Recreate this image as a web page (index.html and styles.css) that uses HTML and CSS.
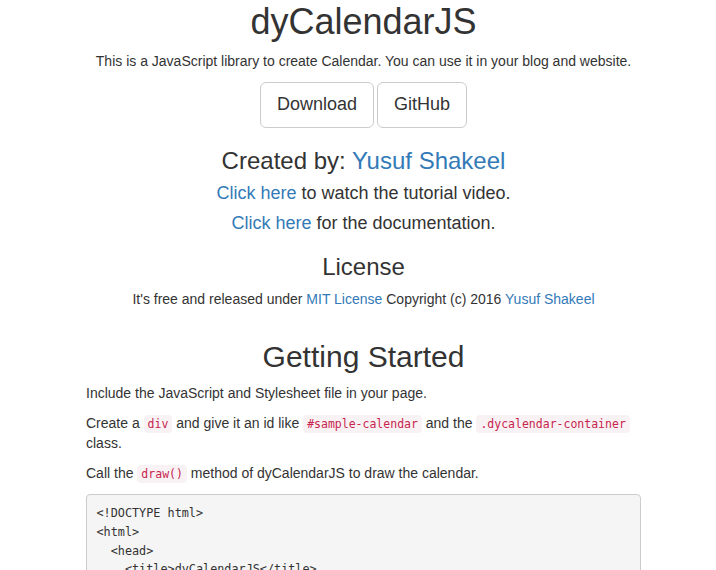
FILE: index.html
```html
<!DOCTYPE html>
<html lang="en">
<head>
<meta charset="utf-8">
<title>dyCalendarJS</title>
<link rel="stylesheet" href="styles.css">
</head>
<body>
<div class="page">
  <header class="center">
    <h1 class="title">dyCalendarJS</h1>
    <p>This is a JavaScript library to create Calendar. You can use it in your blog and website.</p>
    <div class="buttons">
      <a class="btn" href="#">Download</a>
      <a class="btn" href="#">GitHub</a>
    </div>
    <h3>Created by: <a href="#">Yusuf Shakeel</a></h3>
    <h4><a href="#">Click here</a> to watch the tutorial video.</h4>
    <h4><a href="#">Click here</a> for the documentation.</h4>
    <h3>License</h3>
    <p>It's free and released under <a href="#">MIT License</a> Copyright (c) 2016 <a href="#">Yusuf Shakeel</a></p>
  </header>
  <section class="start">
    <h2 class="center">Getting Started</h2>
    <p>Include the JavaScript and Stylesheet file in your page.</p>
    <p>Create a <code>div</code> and give it an id like <code>#sample-calendar</code> and the <code>.dycalendar-container</code> class.</p>
    <p>Call the <code>draw()</code> method of dyCalendarJS to draw the calendar.</p>
<pre>&lt;!DOCTYPE html&gt;
&lt;html&gt;
  &lt;head&gt;
    &lt;title&gt;dyCalendarJS&lt;/title&gt;
    &lt;link rel="stylesheet" href="css/dycalendar.min.css"&gt;
  &lt;/head&gt;
  &lt;body&gt;
    &lt;div id="sample-calendar" class="dycalendar-container"&gt;&lt;/div&gt;
  &lt;/body&gt;
&lt;/html&gt;</pre>
  </section>
</div>
</body>
</html>
```
FILE: styles.css
```css
* { box-sizing: border-box; }
html, body { margin: 0; padding: 0; background: #fff; }
body {
  font-family: "Liberation Sans", Arial, sans-serif;
  font-size: 14px;
  line-height: 1.42857;
  color: #333;
}
a { color: #337ab7; text-decoration: none; }
.page { width: 555px; margin-left: 86px; }
.center { text-align: center; }
p { margin: 0 0 10px; }
h1, h2, h3, h4 { font-weight: 500; line-height: 1.1; color: #333; }
.title { font-size: 36px; margin: 2px 0 10px; }
h2 { font-size: 30px; margin: 30px 0 11px; }
h3 { font-size: 24px; margin: 20px 0 10px; }
h4 { font-size: 18px; margin: 10px 0; }
.buttons { display: flex; justify-content: center; gap: 3px; }
.btn {
  display: inline-block;
  padding: 10px 16px;
  font-size: 18px;
  line-height: 1.3333;
  border: 1px solid #ccc;
  border-radius: 6px;
  color: #333;
  background: #fff;
}
code {
  font-family: "DejaVu Sans Mono", "Liberation Mono", monospace;
  font-size: 11.5px;
  line-height: 1;
  padding: 2px 4px;
  color: #c7254e;
  background: #f9f2f4;
  border-radius: 4px;
}
pre {
  font-family: "DejaVu Sans Mono", "Liberation Mono", monospace;
  font-size: 11.8px;
  line-height: 18.6px;
  margin: 0 0 10px;
  padding: 9.5px;
  background: #f5f5f5;
  border: 1px solid #ccc;
  border-radius: 4px;
  color: #333;
  white-space: pre;
  overflow: hidden;
}
```
